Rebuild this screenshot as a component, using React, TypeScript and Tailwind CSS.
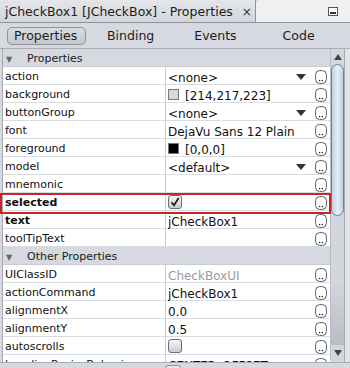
import React from "react";

const Dots = () => (
  <svg width="12" height="14" viewBox="0 0 12 14" className="shrink-0 relative top-[1px]">
    <rect x="0.6" y="0.6" width="10.8" height="12.8" rx="4" fill="#fff" stroke="#5a5d62" strokeWidth="1" />
    <circle cx="4.6" cy="10.6" r="0.75" fill="#222" />
    <circle cx="7.4" cy="10.6" r="0.75" fill="#222" />
  </svg>
);

const Arrow = () => (
  <svg width="10" height="6" viewBox="0 0 10 6" className="shrink-0 relative top-[1px]">
    <path d="M0 0 L10 0 L5 6 Z" fill="#333" />
  </svg>
);

const Check = ({ checked }: { checked?: boolean }) => (
  <div className="w-[14px] h-[14px] rounded-[3px] border border-[#6b6f75] bg-gradient-to-b from-[#f4f5f7] to-[#c9ccd2] flex items-center justify-center">
    {checked && (
      <svg width="10" height="10" viewBox="0 0 10 10">
        <path d="M1.5 5.2 L4 8.3 L8.6 1" fill="none" stroke="#1a1a1a" strokeWidth="1.7" />
      </svg>
    )}
  </div>
);

type RowProps = {
  name: string;
  bold?: boolean;
  value?: React.ReactNode;
  dropdown?: boolean;
};

const Row = ({ name, bold, value, dropdown }: RowProps) => (
  <div className="flex h-[18px] bg-white border-b border-[#d9dce1]">
    <div
      className={`w-[163px] shrink-0 border-r border-[#c9ccd2] pl-[2px] flex items-center text-[11px] text-[#111] ${bold ? "font-bold" : ""}`}
    >
      <span className="relative top-[2px] whitespace-nowrap">{name}</span>
    </div>
    <div className="flex-1 flex items-center pl-[2px] pr-[3px] text-[12px] text-[#111] min-w-0">
      <div className="flex-1 flex items-center min-w-0 whitespace-nowrap overflow-hidden">{value}</div>
      {dropdown && (
        <div className="mr-[9px] flex items-center">
          <Arrow />
        </div>
      )}
      <Dots />
    </div>
  </div>
);

const Header = ({ title }: { title: string }) => (
  <div className="flex h-[18px] items-center bg-[#d6d9df] border-b border-[#c9ccd2] text-[11px] text-[#222]">
    <span className="ml-[3px] w-[21px] text-[8px] text-[#666] relative top-[2px]">▼</span>
    <span className="relative top-[2px]">{title}</span>
  </div>
);

const T = ({ children, className = "" }: { children: React.ReactNode; className?: string }) => (
  <span className={`relative top-[2px] ${className}`}>{children}</span>
);

const Swatch = ({ color }: { color: string }) => (
  <span className="inline-block w-[11px] h-[11px] border border-[#777] mr-[6px] shrink-0 relative top-[1px]" style={{ background: color }} />
);

export default function App() {
  return (
    <div className="relative w-[350px] h-[368px] overflow-hidden bg-[#d6d9df] font-['DejaVu_Sans',sans-serif] select-none">
      {/* title bar */}
      <div className="flex h-[23px] border-b border-[#8f949c]">
        <div className="w-[256px] shrink-0 flex items-center bg-gradient-to-b from-[#e4e6ea] to-[#d2d5db] border-r border-[#8f949c] pl-[5px] text-[12.5px] text-[#1c1c1c]">
          <span className="whitespace-nowrap relative top-[1px]">jCheckBox1 [JCheckBox] - Properties</span>
          <span className="ml-[9px] text-[12px] text-[#333] relative top-[1px]">×</span>
        </div>
        <div className="flex-1 flex items-center justify-end pr-[12px] bg-[#eef0f2] rounded-tl-[5px]">
          <svg width="10" height="9" viewBox="0 0 10 9">
            <rect x="0.5" y="0.5" width="9" height="8" fill="#fff" stroke="#555" />
            <rect x="2" y="5" width="6" height="2" fill="#333" />
          </svg>
        </div>
      </div>
      {/* toolbar */}
      <div className="flex h-[26px] items-center border-b border-[#a9adb4] text-[12.5px] text-[#1c1c1c]">
        <div className="ml-[7px] h-[18px] w-[79px] rounded-[5px] border border-[#8e939b] bg-gradient-to-b from-[#d9dce1] to-[#c5c9cf] flex items-center pl-[6px]">
          <span className="relative top-[1px]">Properties</span>
        </div>
        <span className="ml-[21px] relative top-[1px]">Binding</span>
        <span className="ml-[40px] relative top-[1px]">Events</span>
        <span className="ml-[46px] relative top-[1px]">Code</span>
      </div>
      {/* main */}
      <div className="flex h-[313px]">
        <div className="w-[2px] shrink-0" />
        <div className="w-[1px] shrink-0 bg-[#a5a9b0]" />
        <div className="w-[327px] shrink-0 overflow-hidden">
          <Header title="Properties" />
          <Row name="action" value={<T>&lt;none&gt;</T>} dropdown />
          <Row
            name="background"
            value={
              <>
                <Swatch color="#d6d9df" />
                <T>[214,217,223]</T>
              </>
            }
          />
          <Row name="buttonGroup" value={<T>&lt;none&gt;</T>} dropdown />
          <Row name="font" value={<T>DejaVu Sans 12 Plain</T>} />
          <Row
            name="foreground"
            value={
              <>
                <Swatch color="#000" />
                <T>[0,0,0]</T>
              </>
            }
          />
          <Row name="model" value={<T>&lt;default&gt;</T>} dropdown />
          <Row name="mnemonic" />
          <Row name="selected" bold value={<Check checked />} />
          <Row name="text" bold value={<T>jCheckBox1</T>} />
          <Row name="toolTipText" />
          <Header title="Other Properties" />
          <Row name="UIClassID" value={<T className="text-[#9a9a9a]">CheckBoxUI</T>} />
          <Row name="actionCommand" value={<T>jCheckBox1</T>} />
          <Row name="alignmentX" value={<T>0.0</T>} />
          <Row name="alignmentY" value={<T>0.5</T>} />
          <Row name="autoscrolls" value={<Check />} />
          <Row name="baselineResizeBehavior" value={<T>CENTER_OFFSET</T>} />
        </div>
        {/* scrollbar */}
        <div className="w-[14px] shrink-0 flex flex-col bg-[#d3d6dc] border-l border-[#b9bdc4] h-[311px]">
          <div className="h-[15px] flex items-center justify-center">
            <svg width="8" height="6" viewBox="0 0 8 6">
              <path d="M0 6 L8 6 L4 0 Z" fill="#444" />
            </svg>
          </div>
          <div className="h-[152px] rounded-[7px] border border-[#6f8299] bg-gradient-to-r from-[#bfd0e2] via-[#e6eef6] to-[#bfd0e2]" />
          <div className="flex-1 bg-gradient-to-b from-[#d3d6dc] via-[#d3d6dc] to-[#b9bdc4]" />
          <div className="h-[15px] flex items-center justify-center">
            <svg width="8" height="6" viewBox="0 0 8 6">
              <path d="M0 0 L8 0 L4 6 Z" fill="#444" />
            </svg>
          </div>
        </div>
        <div className="w-[1px] shrink-0 bg-[#a5a9b0]" />
        <div className="flex-1 bg-[#e2e4e8]" />
      </div>
      {/* bottom band */}
      <div className="h-[6px] border-t border-[#a9adb4] bg-[#d6d9df] relative">
        <div className="absolute left-[165px] top-[2px] w-[16px] h-[8px] rounded-[3px] border border-[#8e939b] bg-[#e6e8eb]" />
      </div>
      {/* red highlight annotation */}
      <div className="absolute left-0 top-[193px] w-[331px] h-[21px] border-2 border-[#c4262b] pointer-events-none" />
    </div>
  );
}
